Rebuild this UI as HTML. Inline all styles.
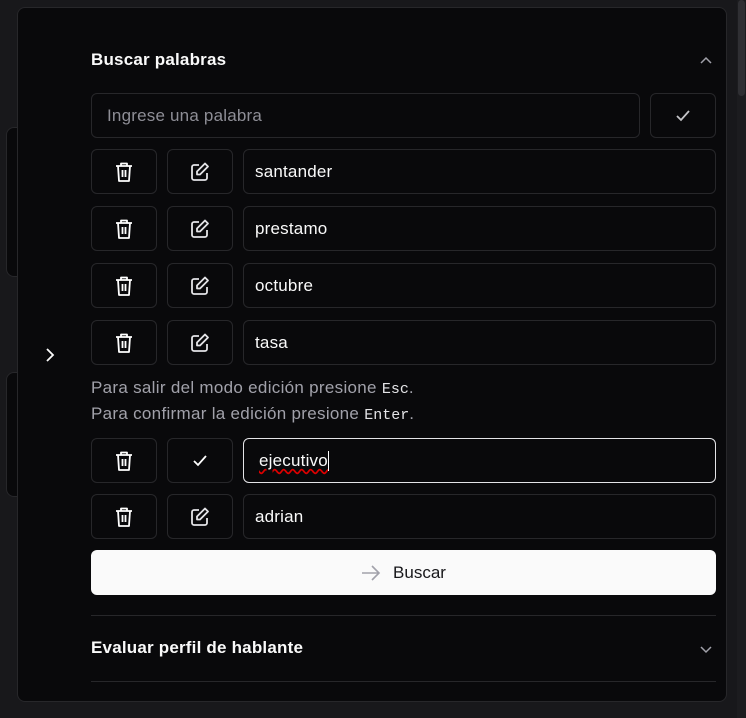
<!DOCTYPE html>
<html><head><meta charset="utf-8"><style>
*{box-sizing:border-box;margin:0;padding:0}
body{width:746px;height:718px;background:#18181b;font-family:"Liberation Sans",sans-serif;position:relative;overflow:hidden;color:#fafafa}
.card{position:absolute;left:6px;width:40px;border:1px solid #27272a;border-radius:8px;background:#09090b}
.panel{position:absolute;left:17px;top:7px;width:710px;height:695px;background:#09090b;border:1px solid #27272a;border-radius:8px}
.sb{position:absolute;left:737px;top:0;width:9px;height:718px;background:#1c1c1f}
.sbt{position:absolute;left:738px;top:0;width:7px;height:96px;background:#2f2f33;border-radius:4px}
.b{position:absolute;border:1px solid #27272a;border-radius:6px;display:flex;align-items:center;justify-content:center}
.inp{position:absolute;border:1px solid #27272a;border-radius:6px;font-size:17px;letter-spacing:0.2px;padding-left:11px;display:flex;align-items:center;color:#fafafa}
.t{position:absolute;font-size:17px;letter-spacing:0.3px;color:#a1a1aa}
code{font-family:"Liberation Mono",monospace;color:#e4e4e7;font-size:15px;letter-spacing:0}
</style></head><body>
<div class="card" style="top:127px;height:150px"></div>
<div class="card" style="top:372px;height:125px"></div>
<div class="panel"></div>
<div class="sb"></div><div class="sbt"></div>
<div style="position:absolute;left:91px;top:50px;font-size:17px;font-weight:bold;letter-spacing:0.2px">Buscar palabras</div>
<svg style="position:absolute;left:699px;top:55px" width="14" height="10" viewBox="0 0 14 10"><path d="M2 8l5-5 5 5" stroke="#a1a1aa" stroke-width="1.5" fill="none"/></svg>
<svg style="position:absolute;left:44px;top:347px" width="12" height="16" viewBox="0 0 12 16"><path d="M3 2l6 6-6 6" stroke="#fafafa" stroke-width="1.8" fill="none"/></svg>
<div class="inp" style="left:91px;top:93px;width:549px;height:45px;color:#8e8e96;padding-left:15px">Ingrese una palabra</div>
<div class="b" style="left:650px;top:93px;width:66px;height:45px"><svg width="16" height="14" viewBox="0 0 16 14"><path d="M2 7l4 4 8-9" stroke="#c4c4c8" stroke-width="1.8" fill="none"/></svg></div>
<div id="rows"></div>
<div class="t" style="left:91px;top:378px">Para salir del modo edición presione <code>Esc</code>.</div>
<div class="t" style="left:91px;top:404px">Para confirmar la edición presione <code>Enter</code>.</div>
<div style="position:absolute;left:91px;top:550px;width:625px;height:45px;background:#fafafa;border-radius:6px;display:flex;align-items:center;justify-content:center;color:#18181b;font-size:17px">
<svg width="20" height="16" viewBox="0 0 20 16" style="margin-right:12px"><path d="M1 8h17M11 1l7 7-7 7" stroke="#a1a1aa" stroke-width="1.6" fill="none"/></svg>Buscar</div>
<div style="position:absolute;left:91px;top:615px;width:625px;height:1px;background:#27272a"></div>
<div style="position:absolute;left:91px;top:638px;font-size:17px;font-weight:bold;letter-spacing:0.2px">Evaluar perfil de hablante</div>
<svg style="position:absolute;left:699px;top:645px" width="14" height="10" viewBox="0 0 14 10"><path d="M2 2l5 5 5-5" stroke="#a1a1aa" stroke-width="1.5" fill="none"/></svg>
<div style="position:absolute;left:91px;top:681px;width:625px;height:1px;background:#27272a"></div>
<script>
var trash='<svg width="20" height="22" viewBox="0 0 20 22"><path d="M2 5h16M7 5V2.5h6V5M4 5l1 15h10l1-15M8.5 9v7M11.5 9v7" stroke="#fff" stroke-width="1.8" fill="none" stroke-linejoin="round"/></svg>';
var edit='<svg width="22" height="22" viewBox="0 0 22 22"><path d="M10 4H5a2 2 0 0 0-2 2v11a2 2 0 0 0 2 2h11a2 2 0 0 0 2-2v-5" stroke="#e4e4e7" stroke-width="1.8" fill="none"/><path d="M16 2.5l3 3-8 8H8v-3z" stroke="#e4e4e7" stroke-width="1.8" fill="none" stroke-linejoin="round"/></svg>';
var chk='<svg width="16" height="14" viewBox="0 0 16 14"><path d="M2 7l4 4 8-9" stroke="#fff" stroke-width="1.8" fill="none"/></svg>';
var rows=[[149,'santander'],[206,'prestamo'],[263,'octubre'],[320,'tasa'],[438,'ejecutivo',1],[494,'adrian']];
var h='';
rows.forEach(function(r){
h+='<div class="b" style="left:91px;top:'+r[0]+'px;width:66px;height:45px">'+trash+'</div>';
h+='<div class="b" style="left:167px;top:'+r[0]+'px;width:66px;height:45px">'+(r[2]?chk:edit)+'</div>';
h+='<div class="inp" style="left:243px;top:'+r[0]+'px;width:473px;height:45px;'+(r[2]?'border:1.5px solid #e4e4e7;padding-left:15px;':'')+'">'+(r[2]?'<span style="text-decoration:underline wavy #d00;text-underline-offset:3px">'+r[1]+'</span><span style="display:inline-block;width:1px;height:20px;background:#fff"></span>':r[1])+'</div>';
});
document.getElementById('rows').innerHTML=h;
</script>
</body></html>
